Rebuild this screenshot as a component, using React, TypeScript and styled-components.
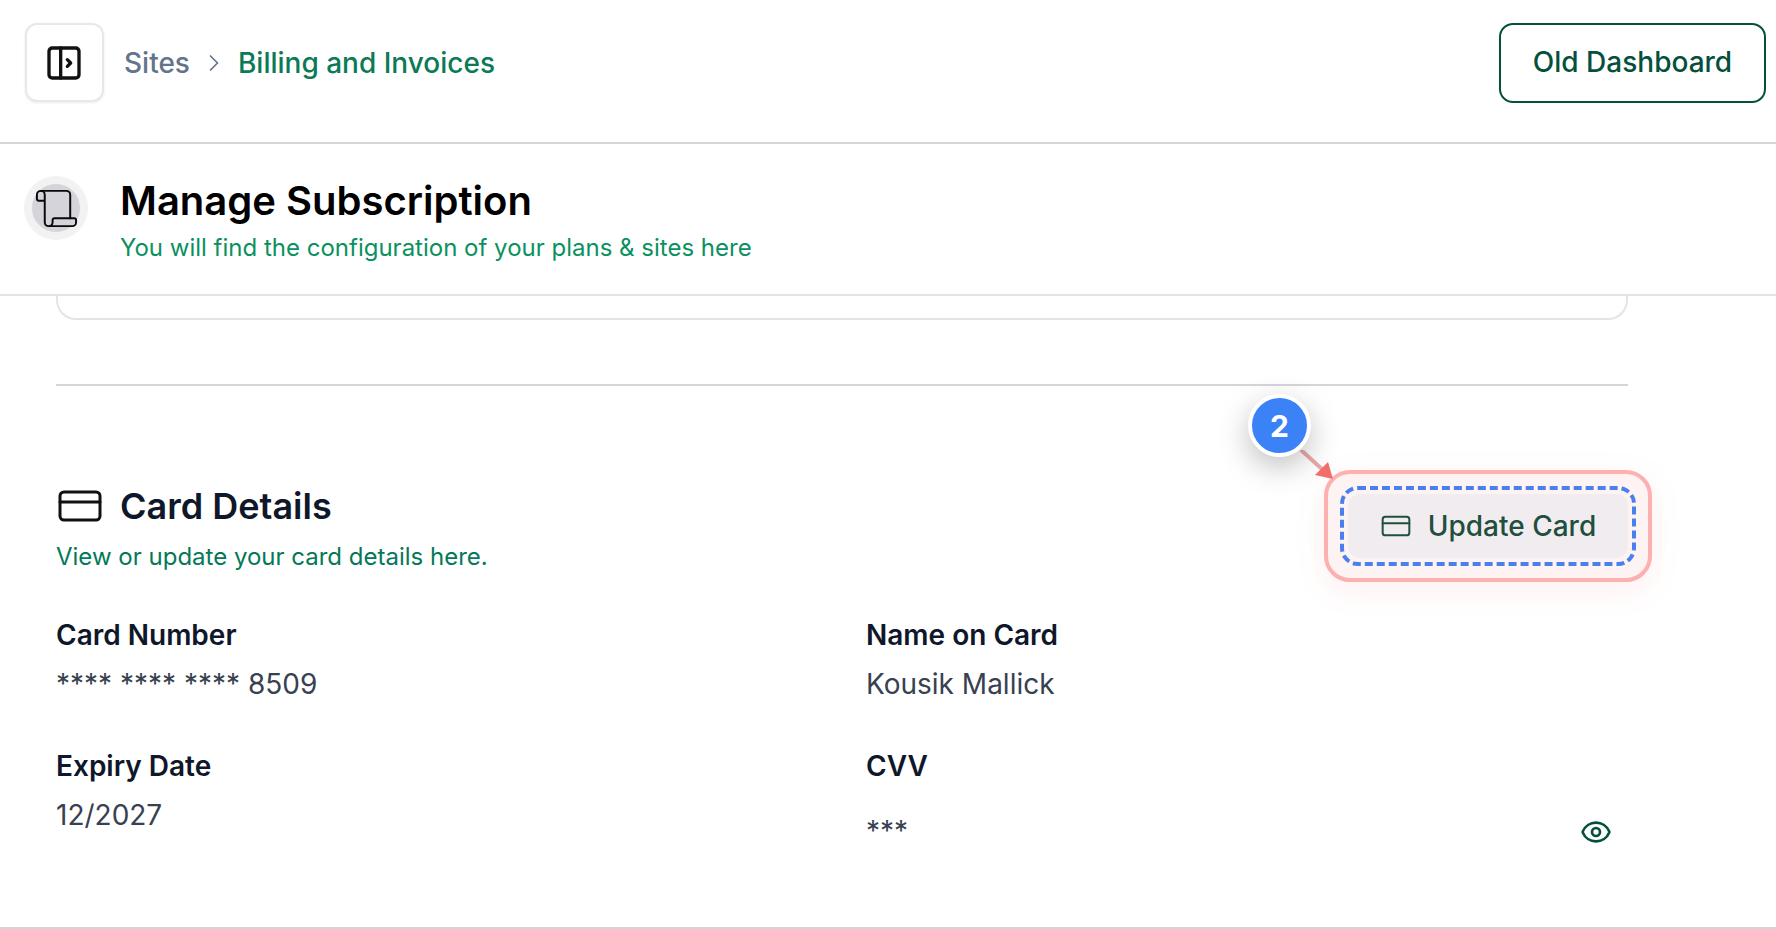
import React from "react";
import styled, { createGlobalStyle } from "styled-components";
import { ChevronRight, CreditCard, Eye, Scroll } from "lucide-react";

const GlobalStyle = createGlobalStyle`
  html, body {
    margin: 0;
    padding: 0;
    background: #ffffff;
  }
  body {
    font-family: Inter, "Liberation Sans", sans-serif;
    overflow: hidden;
  }
`;

const Page = styled.div`
  width: 1776px;
  height: 929px;
  overflow: hidden;
  display: flex;
  flex-direction: column;
`;

const TopBar = styled.header`
  box-sizing: border-box;
  height: 144px;
  flex: none;
  display: flex;
  justify-content: space-between;
  align-items: flex-start;
  padding: 23px 10px 0 25px;
  border-bottom: 2px solid #d4d4da;
`;

const Crumbs = styled.div`
  display: flex;
  align-items: center;
  height: 79px;
`;

const ToggleButton = styled.button`
  box-sizing: border-box;
  width: 79px;
  height: 79px;
  margin-right: 20px;
  padding: 0 2px 0 0;
  display: flex;
  align-items: center;
  justify-content: center;
  background: #fff;
  border: 2px solid #e8e8eb;
  border-radius: 12px;
  box-shadow: 0 1px 3px rgba(0, 0, 0, 0.08);
  color: #111;
`;

const Crumb = styled.span<{ $active?: boolean }>`
  font-size: 28px;
  font-weight: 500;
  color: ${(p) => (p.$active ? "#0b7a57" : "#64748b")};
`;

const CrumbSep = styled.span`
  display: flex;
  margin: 0 10px;
  color: #64748b;
`;

const OldButton = styled.button`
  box-sizing: border-box;
  width: 267px;
  height: 80px;
  padding: 0 0 2px;
  background: #fff;
  border: 2px solid #04503c;
  border-radius: 14px;
  color: #04503c;
  font-family: inherit;
  font-size: 28px;
  font-weight: 500;
`;

const SubHeader = styled.div`
  box-sizing: border-box;
  height: 152px;
  flex: none;
  display: flex;
  align-items: flex-start;
  padding: 32px 0 0 24px;
  border-bottom: 2px solid #e4e4e7;
`;

const IconHalo = styled.div`
  width: 64px;
  height: 64px;
  flex: none;
  border-radius: 50%;
  background: #f2f2f3;
  display: flex;
  align-items: center;
  justify-content: center;
  margin-right: 32px;
`;

const IconDisc = styled.div`
  width: 48px;
  height: 48px;
  border-radius: 50%;
  background: #d4d4da;
  display: flex;
  align-items: center;
  justify-content: center;
  color: #09090b;
`;

const PageTitle = styled.h1`
  margin: -1px 0 0;
  font-size: 40px;
  line-height: 52px;
  font-weight: 600;
  color: #000;
`;

const PageSub = styled.p`
  margin: 5px 0 0;
  font-size: 24px;
  line-height: 32px;
  color: #0b9160;
`;

const Content = styled.main`
  box-sizing: border-box;
  width: 1572px;
  margin-left: 56px;
  flex: 1;
`;

const CardStub = styled.div`
  box-sizing: border-box;
  height: 24px;
  border: 2px solid #e4e4e7;
  border-top: none;
  border-radius: 0 0 20px 20px;
`;

const Divider = styled.hr`
  margin: 64px 0 0;
  border: none;
  border-top: 2px solid #d4d4da;
`;

const Section = styled.section`
  padding-top: 96px;
`;

const SectionHead = styled.div`
  display: flex;
  justify-content: space-between;
  align-items: flex-start;
`;

const TitleRow = styled.div`
  display: flex;
  align-items: center;
  gap: 16px;
  color: #0f172a;
`;

const IconWrap = styled.span`
  display: flex;
  width: 48px;
  justify-content: center;
  color: #111;
`;

const SectionTitle = styled.h2`
  margin: 0;
  font-size: 36px;
  line-height: 44px;
  font-weight: 600;
  color: #0f172a;
`;

const SectionSub = styled.p`
  margin: 11px 0 0;
  font-size: 24px;
  line-height: 32px;
  color: #047857;
`;

const UpdateWrap = styled.div`
  position: relative;
  isolation: isolate;
  margin-top: 12px;
`;

const UpdateButton = styled.button`
  box-sizing: border-box;
  width: 280px;
  height: 64px;
  display: flex;
  align-items: center;
  justify-content: center;
  gap: 16px;
  background: #f1ecf0;
  border: none;
  border-radius: 12px;
  color: #1f4f3d;
  font-family: inherit;
  font-size: 28px;
  font-weight: 500;
`;

const Highlight = styled.div`
  position: absolute;
  box-sizing: border-box;
  left: -24px;
  top: -24px;
  width: 328px;
  height: 112px;
  border: 4px solid #fcb0b0;
  border-radius: 26px;
  background: #fef3f3;
  box-shadow: 0 8px 30px rgba(248, 113, 113, 0.12);
  z-index: -1;
`;

const DashedFrame = styled.div`
  position: absolute;
  box-sizing: border-box;
  left: -8px;
  top: -8px;
  width: 296px;
  height: 80px;
  border: 4px dashed #4a80ee;
  border-radius: 18px;
`;

const Pointer = styled.svg`
  position: absolute;
  left: -48px;
  top: -44px;
`;

const Badge = styled.div`
  position: absolute;
  box-sizing: border-box;
  left: -100px;
  top: -100px;
  width: 63px;
  height: 63px;
  display: flex;
  align-items: center;
  justify-content: center;
  border: 4px solid #fff;
  border-radius: 50%;
  background: #3b82f6;
  box-shadow: 0 10px 30px rgba(0, 0, 0, 0.25);
  color: #fff;
  font-size: 30px;
  font-weight: 700;
`;

const FieldGrid = styled.div`
  display: grid;
  grid-template-columns: 810px 1fr;
  grid-template-rows: 131.4px 131.4px;
  margin-top: 44px;
`;

const Field = styled.div`
  display: flex;
  flex-direction: column;
`;

const FieldLabel = styled.div`
  font-size: 28px;
  line-height: 36px;
  font-weight: 600;
  color: #0f172a;
`;

const FieldValue = styled.div`
  margin-top: 12px;
  font-size: 28px;
  line-height: 38px;
  color: #374151;
`;

const SecretRow = styled.div`
  display: flex;
  justify-content: space-between;
  align-items: center;
  margin-top: 28px;
  padding-right: 16px;
  font-size: 28px;
  line-height: 38px;
  color: #374151;
  height: 38px;
`;

const EyeButton = styled.span`
  display: flex;
  padding-top: 2px;
  color: #04503c;
`;

const BottomLine = styled.hr`
  margin: 0;
  border: none;
  border-top: 2px solid #d4d4da;
`;

const fields = [
  { label: "Card Number", value: "**** **** **** 8509" },
  { label: "Name on Card", value: "Kousik Mallick" },
  { label: "Expiry Date", value: "12/2027" },
];

export default function App() {
  return (
    <>
      <GlobalStyle />
      <Page>
        <TopBar>
          <Crumbs>
            <ToggleButton>
              <svg width="40" height="40" viewBox="0 0 24 24" fill="none" stroke="currentColor" strokeWidth="2" strokeLinecap="round" strokeLinejoin="round">
                <rect x="3" y="3" width="18" height="18" rx="2" />
                <path d="M10 3v18" />
                <path d="m14 10 2 2-2 2" />
              </svg>
            </ToggleButton>
            <Crumb>Sites</Crumb>
            <CrumbSep>
              <ChevronRight size={28} strokeWidth={1.5} />
            </CrumbSep>
            <Crumb $active>Billing and Invoices</Crumb>
          </Crumbs>
          <OldButton>Old Dashboard</OldButton>
        </TopBar>
        <SubHeader>
          <IconHalo>
            <IconDisc>
              <Scroll size={47} strokeWidth={1} />
            </IconDisc>
          </IconHalo>
          <div>
            <PageTitle>Manage Subscription</PageTitle>
            <PageSub>You will find the configuration of your plans &amp; sites here</PageSub>
          </div>
        </SubHeader>
        <Content>
          <CardStub />
          <Divider />
          <Section>
            <SectionHead>
              <div>
                <TitleRow>
                  <IconWrap>
                    <CreditCard size={48} strokeWidth={1.5} />
                  </IconWrap>
                  <SectionTitle>Card Details</SectionTitle>
                </TitleRow>
                <SectionSub>View or update your card details here.</SectionSub>
              </div>
              <UpdateWrap>
                <Highlight />
                <UpdateButton>
                  <CreditCard size={32} strokeWidth={1.5} />
                  Update Card
                </UpdateButton>
                <DashedFrame />
                <Pointer width="60" height="60" viewBox="0 0 60 60">
                  <path d="M1 0 L23 20" stroke="#e9aaaa" strokeWidth="4" />
                  <path d="M33 29 L15 25 L28 12 Z" fill="#f26f6f" />
                </Pointer>
                <Badge>2</Badge>
              </UpdateWrap>
            </SectionHead>
            <FieldGrid>
              {fields.map((f) => (
                <Field key={f.label}>
                  <FieldLabel>{f.label}</FieldLabel>
                  <FieldValue>{f.value}</FieldValue>
                </Field>
              ))}
              <Field>
                <FieldLabel>CVV</FieldLabel>
                <SecretRow>
                  ***
                  <EyeButton>
                    <Eye size={32} strokeWidth={2} />
                  </EyeButton>
                </SecretRow>
              </Field>
            </FieldGrid>
          </Section>
        </Content>
        <BottomLine />
      </Page>
    </>
  );
}
